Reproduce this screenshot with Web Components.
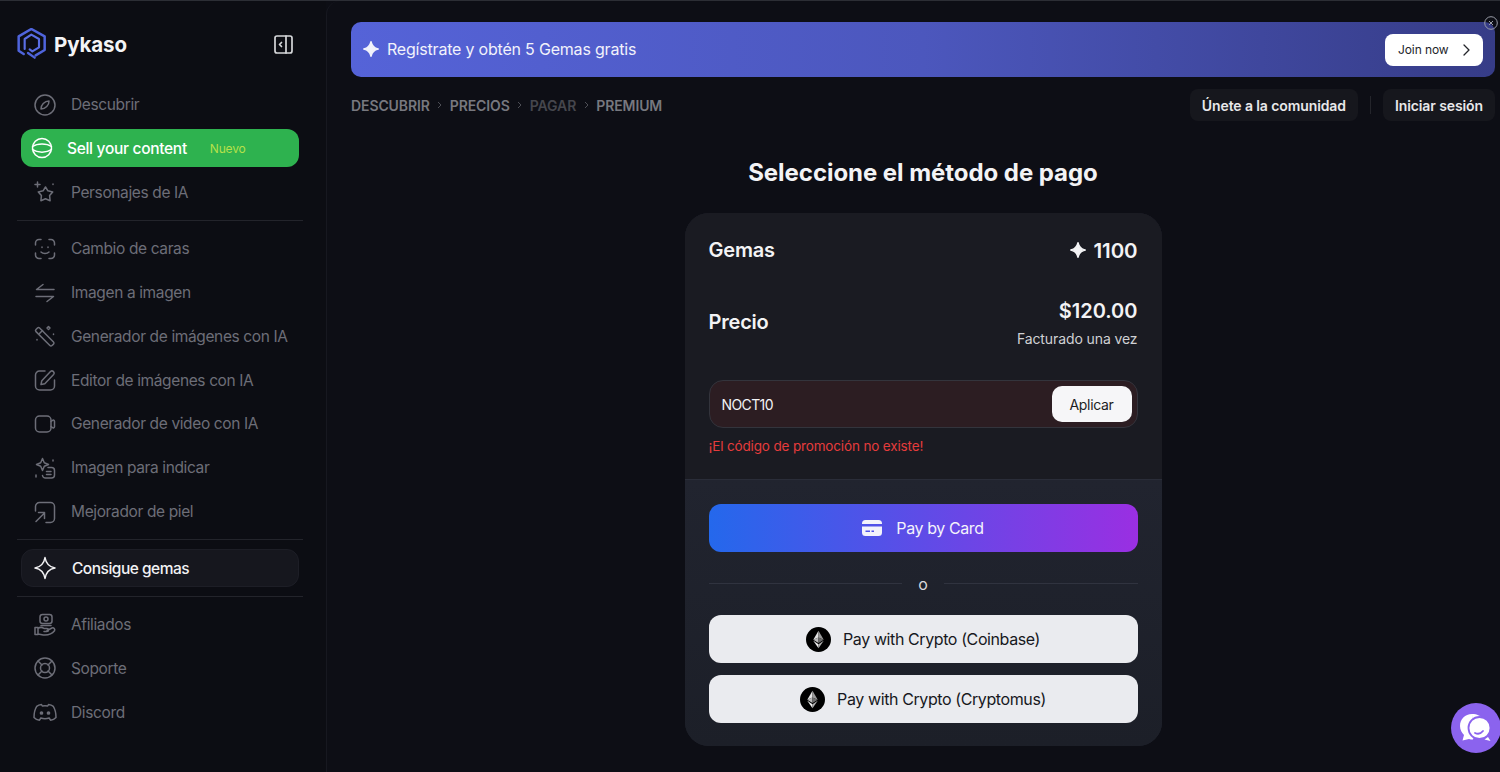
<!DOCTYPE html>
<html lang="es">
<head>
<meta charset="utf-8">
<title>Pykaso</title>
<style>
html, body { margin: 0; height: 100%; }
body { background: #0d0e15; font-family: Inter, "Liberation Sans", sans-serif; overflow: hidden; }
</style>
</head>
<body>
<pk-app>
  <pk-sidebar slot="side">
    <pk-nav-item icon="compass">Descubrir</pk-nav-item>
    <pk-nav-item icon="globe" variant="green" badge="Nuevo">Sell your content</pk-nav-item>
    <pk-nav-item icon="stars">Personajes de IA</pk-nav-item>
    <pk-divider></pk-divider>
    <pk-nav-item icon="face">Cambio de caras</pk-nav-item>
    <pk-nav-item icon="swap">Imagen a imagen</pk-nav-item>
    <pk-nav-item icon="wand">Generador de imágenes con IA</pk-nav-item>
    <pk-nav-item icon="edit">Editor de imágenes con IA</pk-nav-item>
    <pk-nav-item icon="video">Generador de video con IA</pk-nav-item>
    <pk-nav-item icon="prompt">Imagen para indicar</pk-nav-item>
    <pk-nav-item icon="skin">Mejorador de piel</pk-nav-item>
    <pk-divider></pk-divider>
    <pk-nav-item icon="gem" variant="dark">Consigue gemas</pk-nav-item>
    <pk-divider></pk-divider>
    <pk-nav-item icon="hand">Afiliados</pk-nav-item>
    <pk-nav-item icon="buoy">Soporte</pk-nav-item>
    <pk-nav-item icon="discord">Discord</pk-nav-item>
  </pk-sidebar>
  <pk-banner>Regístrate y obtén 5 Gemas gratis</pk-banner>
  <pk-topbar></pk-topbar>
  <pk-payment></pk-payment>
  <pk-chat></pk-chat>
</pk-app>

<script>
const ICONS = {
  compass: '<circle cx="12" cy="12" r="10"/><path d="M16 8c.2 4-3.500 8-8 8-.2-4 3.500-8 8-8z"/>',
  globe: '<circle cx="12" cy="12" r="9.500"/><path d="M2.500 10.500c5-3.500 14-3.500 19 0M2.500 13.500c5 3.500 14 3.500 19 0"/>',
  stars: '<path d="M12.500 7l2.400 3.800 4.800 1.100-3.100 3.700.5 5.200-4.600-2-4.600 2 .5-5.200-3.100-3.700 4.800-1.100z"/><path d="M4.500 2v5M2 4.500h5M20 4v.5"/>',
  face: '<path d="M8 2.500H6A3.500 3.500 0 0 0 2.500 6v2M16 2.500h2A3.500 3.500 0 0 1 21.500 6v2M8 21.500H6A3.500 3.500 0 0 1 2.500 18v-2M16 21.500h2a3.500 3.500 0 0 0 3.500-3.500v-2"/><path d="M8 15c2 2 6 2 8 0M9 10v.5M15 10v.5"/>',
  swap: '<path d="M21 8.500H3.500L10 3.500M3 15.500h17.500L14 20.500"/>',
  wand: '<path d="M3 5.500l1.500-1.500a1.500 1.500 0 0 1 2.100 0L20.500 18a1.500 1.500 0 0 1 0 2.100L19 21.500a1.500 1.500 0 0 1-2.100 0L3 7.600a1.500 1.500 0 0 1 0-2.100z"/><path d="M6.500 9.500l3-3M15.500 2.500l1.500 1.500-1.500 1.500-1.500-1.500zM4 15.500v.5M20.500 10v.5"/>',
  edit: '<path d="M12 3H6.500A4 4 0 0 0 2.500 7v11a4 4 0 0 0 4 4h11a4 4 0 0 0 4-4v-6"/><path d="M8 16.500l.8-3.800 8.700-9.200a2.200 2.200 0 0 1 3.100 3.100l-8.800 9.100z"/>',
  video: '<rect x="2.500" y="4" width="15.500" height="16" rx="4"/><path d="M18 9.500l1.500-1.200a1.300 1.300 0 0 1 2 1v5.400a1.300 1.300 0 0 1-2 1L18 14.500"/>',
  prompt: '<path d="M9.500 2.500l1.800 4.200 4.200 1.800-4.200 1.800-1.800 4.200-1.800-4.200-4.200-1.800 4.200-1.800z"/><path d="M15 11.500h3.500a3 3 0 0 1 3 3V19a3 3 0 0 1-3 3h-6a3 3 0 0 1-3-2.500M13.500 15.500h4.500M13.500 18.500h4.500M20 4v1M3 19v2"/>',
  skin: '<path d="M2.500 11V6.500a4 4 0 0 1 4-4h11a4 4 0 0 1 4 4v12a4 4 0 0 1-4 4H13"/><path d="M3 21.500l8-8M5.500 12.500h6v6"/>',
  gem: '<path d="M12 1.500c1 6 4 9.500 10 10.500-6 1-9 4.500-10 10.500-1-6-4-9.500-10-10.500 6-1 9-4.500 10-10.500z"/>',
  hand: '<rect x="7" y="1.500" width="12" height="9" rx="2.500"/><circle cx="13" cy="6" r="2"/><path d="M8 12.500h10"/><path d="M2 14.500h3v7H2zM5 15.500c2-1.500 4-1.500 6 0h3a1.500 1.500 0 0 1 0 3h-3M14 17.500l5-2.500a2 2 0 0 1 2.500 2.800C19 21 16 22 12 22c-3 0-5-1-7-1"/>',
  buoy: '<circle cx="12" cy="12" r="10"/><circle cx="12" cy="12" r="4.500"/><path d="M5 5l4 4M19 5l-4 4M5 19l4-4M19 19l-4-4"/>',
  discord: '<path d="M8.500 4.500c-2 .2-3.700.9-4.800 1.800C2 9 1 13 1 17.500c1.500 1.700 3.500 2.500 5.500 2.700l1.300-2.200c2.800 1 5.600 1 8.400 0l1.300 2.200c2-.2 4-1 5.500-2.700 0-4.500-1-8.500-2.700-11.200-1.100-.9-2.800-1.600-4.800-1.800l-.8 1.500a15 15 0 0 0-5.400 0z"/><circle cx="8.500" cy="13" r="1.100" fill="currentColor"/><circle cx="15.500" cy="13" r="1.100" fill="currentColor"/>'
};

// fat four point star, used filled in the banner and next to the gem count
const SPARK = '<path fill="currentColor" stroke="currentColor" stroke-width="2.200" stroke-linejoin="round" d="M12 2.500c1.300 5.800 3.700 8.200 9.500 9.500-5.800 1.300-8.200 3.700-9.500 9.500-1.300-5.800-3.700-8.200-9.500-9.500 5.800-1.300 8.200-3.700 9.500-9.500z"/>';

const ETH = `<svg width="25" height="25" viewBox="0 0 24 24"><circle cx="12" cy="12" r="12" fill="#000"/>
  <path d="M12 3.500L7 12.200 12 10z" fill="#e4e4e4"/><path d="M12 3.500l5 8.700L12 10z" fill="#9a9a9a"/>
  <path d="M12 10l-5 2.200L12 15.300z" fill="#b8b8b8"/><path d="M12 10l5 2.200L12 15.300z" fill="#6e6e6e"/>
  <path d="M7 13.300L12 20.300v-3.800z" fill="#f0f0f0"/><path d="M17 13.300L12 20.300v-3.800z" fill="#b0b0b0"/></svg>`;

class PkIcon extends HTMLElement {
  static get observedAttributes() {
    return ['name'];
  }
  constructor() {
    super();
    this.attachShadow({ mode: 'open' });
  }
  attributeChangedCallback() {
    this.update();
  }
  update() {
    const size = this.getAttribute('size') || 24;
    this.shadowRoot.innerHTML = `
      <style>:host { display: inline-flex; flex: none; } svg { display: block; }</style>
      <svg width="${size}" height="${size}" viewBox="0 0 24 24" fill="none" stroke="currentColor"
        stroke-width="1.500" stroke-linecap="round" stroke-linejoin="round">${ICONS[this.getAttribute('name')] || ''}</svg>`;
  }
}
customElements.define('pk-icon', PkIcon);

const apptpl = document.createElement('template');
apptpl.innerHTML = `
  <style>
    :host { display: flex; height: 772px; box-sizing: border-box; border-top: 1px solid #2c2e35; position: relative; overflow: hidden; }
    #main { flex: 1; min-width: 0; padding: 21px 5px 0 24px; border-left: 1px solid #171820; border-top-left-radius: 14px; display: flex; flex-direction: column; }
  </style>
  <slot name="side"></slot>
  <div id="main"><slot></slot></div>`;

class PkApp extends HTMLElement {
  constructor() {
    super();
    this.attachShadow({ mode: 'open' }).appendChild(apptpl.content.cloneNode(true));
  }
}
customElements.define('pk-app', PkApp);

const sidetpl = document.createElement('template');
sidetpl.innerHTML = `
  <style>
    :host { display: block; width: 326px; flex: none; box-sizing: border-box; padding: 0 23px 0 17px; background: #0c0d13; }
    #head { height: 81.700px; display: flex; align-items: center; padding-top: 5px; box-sizing: border-box; }
    #name { font: 700 20.500px Inter, "Liberation Sans", sans-serif; color: #f4f4f6; margin-left: 7px; letter-spacing: -.1px; }
    #toggle { margin-left: auto; margin-right: 10px; color: #d6d7da; display: block; }
  </style>
  <div id="head">
    <svg width="30" height="33" viewBox="22 22 90 99" fill="none" stroke-linecap="round" stroke-linejoin="round">
      <path d="M42 100L27 90V47L65 25l40 22v41l-27 16" stroke="#4f64dc" stroke-width="7.500"/>
      <path d="M45 85V55l20-13 23 13v25L68 92l-8-6" stroke="#5a6ee4" stroke-width="6.500"/>
      <path d="M55 97l20 14" stroke="#4f64dc" stroke-width="7"/>
    </svg>
    <span id="name">Pykaso</span>
    <svg id="toggle" width="19" height="19" viewBox="0 0 19 19" fill="none" stroke="currentColor" stroke-width="1.700" stroke-linecap="round" stroke-linejoin="round">
      <rect x="1" y="1" width="17" height="17" rx="2"/><path d="M12 1v17M7.500 7.500L5.500 9.500l2 2"/>
    </svg>
  </div>
  <slot></slot>`;

class PkSidebar extends HTMLElement {
  constructor() {
    super();
    this.attachShadow({ mode: 'open' }).appendChild(sidetpl.content.cloneNode(true));
  }
}
customElements.define('pk-sidebar', PkSidebar);

class PkDivider extends HTMLElement {
  constructor() {
    super();
    this.attachShadow({ mode: 'open' }).innerHTML = `
      <style>:host { display: block; height: 1px; background: #23242b; margin: 5.900px 0; }</style>`;
  }
}
customElements.define('pk-divider', PkDivider);

const navtpl = document.createElement('template');
navtpl.innerHTML = `
  <style>
    :host { display: flex; align-items: center; height: 43.800px; padding: 0 4px; font: 400 15.500px Inter, "Liberation Sans", sans-serif; color: #6d6e78; }
    #row { flex: 1; display: flex; align-items: center; height: 38px; padding-left: 12px; gap: 14px; border-radius: 12px; white-space: nowrap; letter-spacing: -.37px; }
    :host([variant="green"]) #row { background: #2eb24f; color: #fff; gap: 13px; padding-left: 9px; font-weight: 500; letter-spacing: -.3px; }
    :host([variant="dark"]) #row { background: #16171e; color: #f2f2f4; border: 1px solid #1d1e26; box-sizing: border-box; font-weight: 500; padding-left: 11px; gap: 15px; letter-spacing: -.5px; }
    #badge { font-size: 12px; color: #b5e04a; margin-left: 10px; font-weight: 400; letter-spacing: -.2px; }
  </style>
  <div id="row"><pk-icon></pk-icon><span><slot></slot></span><span id="badge"></span></div>`;

class PkNavItem extends HTMLElement {
  constructor() {
    super();
    this.attachShadow({ mode: 'open' }).appendChild(navtpl.content.cloneNode(true));
  }
  connectedCallback() {
    this.shadowRoot.querySelector('pk-icon').setAttribute('name', this.getAttribute('icon'));
    if (this.getAttribute('badge')) this.shadowRoot.querySelector('#badge').textContent = this.getAttribute('badge');
    else this.shadowRoot.querySelector('#badge').remove();
  }
}
customElements.define('pk-nav-item', PkNavItem);

const bannertpl = document.createElement('template');
bannertpl.innerHTML = `
  <style>
    :host { display: flex; align-items: center; height: 55px; flex: none; padding: 0 12px 2px 11px; border-radius: 10px; background: linear-gradient(90deg, #5563d8 0%, #4c57bd 50%, #363c87 100%); color: #f1f2fb; font: 400 16px Inter, "Liberation Sans", sans-serif; position: relative; box-sizing: border-box; }
    #msg { margin-left: 7px; letter-spacing: -.2px; }
    #join { margin-left: auto; width: 98px; box-sizing: border-box; height: 32px; background: #fff; border-radius: 8px; color: #23242a; font-size: 12px; letter-spacing: -.1px; display: flex; align-items: center; justify-content: space-between; padding: 0 13px; margin-bottom: -2px; white-space: nowrap; }
    #close { position: absolute; top: -6px; right: -3px; color: #9a9da8; }
    svg { display: block; }
  </style>
  <svg width="18" height="18" viewBox="0 0 24 24">${SPARK}</svg>
  <span id="msg"><slot></slot></span>
  <div id="join">Join now
    <svg width="8" height="12" viewBox="0 0 8 12" fill="none" stroke="currentColor" stroke-width="1.300" stroke-linecap="round" stroke-linejoin="round"><path d="M2 1l5 5-5 5"/></svg>
  </div>
  <svg id="close" width="14" height="14" viewBox="0 0 14 14" fill="none" stroke="currentColor" stroke-width="1"><circle cx="7" cy="7" r="6.300"/><path d="M5 5l4 4M9 5l-4 4"/></svg>`;

class PkBanner extends HTMLElement {
  constructor() {
    super();
    this.attachShadow({ mode: 'open' }).appendChild(bannertpl.content.cloneNode(true));
  }
}
customElements.define('pk-banner', PkBanner);

const toptpl = document.createElement('template');
toptpl.innerHTML = `
  <style>
    :host { display: flex; align-items: center; height: 32px; margin-top: 12px; flex: none; font: 600 14px Inter, "Liberation Sans", sans-serif; }
    #crumbs { display: flex; align-items: center; color: #77787f; gap: 7.500px; letter-spacing: -.1px; }
    #crumbs i { font-style: normal; color: #4d4e55; display: block; }
    #crumbs .off { color: #45464d; }
    #right { margin-left: auto; display: flex; align-items: center; }
    .btn { height: 32px; display: flex; align-items: center; padding: 0 12px; background: #16171d; border-radius: 8px; color: #e8e8ea; letter-spacing: -.1px; }
    #sep { width: 1px; height: 18px; background: #24252b; margin: 0 12px; }
    svg { display: block; }
  </style>
  <div id="crumbs"></div>
  <div id="right">
    <div class="btn">Únete a la comunidad</div>
    <div id="sep"></div>
    <div class="btn">Iniciar sesión</div>
  </div>`;

class PkTopbar extends HTMLElement {
  constructor() {
    super();
    this.attachShadow({ mode: 'open' }).appendChild(toptpl.content.cloneNode(true));
  }
  connectedCallback() {
    const arrow = '<i><svg width="5" height="8" viewBox="0 0 5 8" fill="none" stroke="currentColor" stroke-width="1"><path d="M1 1l3 3-3 3"/></svg></i>';
    this.shadowRoot.querySelector('#crumbs').innerHTML =
      ['DESCUBRIR', 'PRECIOS', '<span class="off">PAGAR</span>', 'PREMIUM'].map(c => `<span>${c}</span>`).join(arrow);
  }
}
customElements.define('pk-topbar', PkTopbar);

const paytpl = document.createElement('template');
paytpl.innerHTML = `
  <style>
    :host { display: block; flex: none; font-family: Inter, "Liberation Sans", sans-serif; color: #f3f3f5; }
    h1 { margin: 36px 0 24px; font-size: 24px; line-height: 32px; font-weight: 700; text-align: center; letter-spacing: -.05px; }
    #card { width: 477px; margin: 0 auto; border-radius: 24px; overflow: hidden; background: #1e212c; }
    #top { height: 267px; box-sizing: border-box; padding: 23px 24px 0; background: #1a1b22; border-bottom: 1px solid #2a2d39; }
    #bottom { height: 266px; box-sizing: border-box; padding: 24px 24px 0; background: linear-gradient(180deg, #21242f, #1c1f28); }
    .row { display: flex; justify-content: space-between; align-items: center; }
    .lbl { font-size: 20px; font-weight: 600; letter-spacing: -.2px; }
    #gems { height: 28px; }
    #gemv { display: flex; align-items: center; gap: 7px; font-size: 20.500px; font-weight: 600; letter-spacing: -.1px; }
    #price { margin-top: 29px; height: 58px; }
    #amount { text-align: right; }
    #amount b { display: block; font-size: 20px; line-height: 28px; font-weight: 600; }
    #amount small { display: block; font-size: 14px; line-height: 18px; margin-top: 5px; color: #d0d1d4; letter-spacing: -.1px; }
    #promo { margin-top: 29px; height: 48px; box-sizing: border-box; border: 1px solid #33343c; border-radius: 14px; background: #2c1d22; display: flex; align-items: center; padding: 0 5px 0 12px; font-size: 14px; letter-spacing: -.6px; }
    #apply { margin-left: auto; width: 80px; height: 36px; border-radius: 10px; background: #f6f6f8; color: #1d1e24; display: flex; align-items: center; justify-content: center; letter-spacing: -.3px; }
    #err { margin-top: 9px; font-size: 13.500px; line-height: 18px; color: #e53c3c; letter-spacing: -.15px; }
    .pay { height: 48px; border-radius: 12px; display: flex; align-items: center; justify-content: center; font-size: 16px; gap: 12px; letter-spacing: -.4px; }
    #card-btn { background: linear-gradient(90deg, #2468ec, #9a2fe2); color: #f3f3fb; gap: 14px; }
    .crypto { background: #eaebef; color: #17181d; }
    #or { display: flex; align-items: center; gap: 16.500px; height: 63px; font-size: 16px; color: #d8d9dc; }
    #or span { flex: 1; height: 1px; background: #30333f; }
    .crypto + .crypto { margin-top: 12px; }
    svg { display: block; }
  </style>
  <h1>Seleccione el método de pago</h1>
  <div id="card">
    <div id="top">
      <div class="row" id="gems">
        <div class="lbl">Gemas</div>
        <div id="gemv"><svg width="18" height="18" viewBox="0 0 24 24">${SPARK}</svg>1100</div>
      </div>
      <div class="row" id="price">
        <div class="lbl">Precio</div>
        <div id="amount"><b>$120.00</b><small>Facturado una vez</small></div>
      </div>
      <div id="promo">NOCT10<div id="apply">Aplicar</div></div>
      <div id="err">¡El código de promoción no existe!</div>
    </div>
    <div id="bottom">
      <div class="pay" id="card-btn">
        <svg width="20" height="16" viewBox="0 0 20 16"><path fill="currentColor" fill-rule="evenodd" d="M3.500 0h13A3.500 3.500 0 0 1 20 3.500V4H0v-.5A3.500 3.500 0 0 1 3.500 0zM0 6.500h20v6a3.500 3.500 0 0 1-3.500 3.500h-13A3.500 3.500 0 0 1 0 12.500zM3.500 10.500v1.500H8v-1.500zM9.500 10.500v1.500H12v-1.500z"/></svg>
        Pay by Card
      </div>
      <div id="or"><span></span>o<span></span></div>
      <div class="pay crypto">${ETH}Pay with Crypto (Coinbase)</div>
      <div class="pay crypto">${ETH}Pay with Crypto (Cryptomus)</div>
    </div>
  </div>`;

class PkPayment extends HTMLElement {
  constructor() {
    super();
    this.attachShadow({ mode: 'open' }).appendChild(paytpl.content.cloneNode(true));
  }
}
customElements.define('pk-payment', PkPayment);

class PkChat extends HTMLElement {
  constructor() {
    super();
    this.attachShadow({ mode: 'open' }).innerHTML = `
      <style>
        :host { position: absolute; left: 1451px; top: 702px; width: 50px; height: 50px; border-radius: 50%; background: #8b63ee; display: flex; align-items: center; justify-content: center; }
        svg { display: block; }
      </style>
      <svg width="34" height="30" viewBox="0 0 34 30">
        <path fill="#fff" d="M13 1C6 1 1 6 1 13c0 4 2 7 4 9l-1.500 5.500L10 26c1 .4 3 .5 4 .5z"/>
        <path fill="#fff" d="M13 1c5 0 9 2 11 5l-10 20z"/>
        <circle cx="20.500" cy="15" r="11" fill="#fff" stroke="#8b63ee" stroke-width="1.800"/>
        <path d="M29 24l2.500 4-6-1.500z" fill="#fff"/>
        <path d="M16 20c3 1.500 6 .5 8-2" fill="none" stroke="#8b63ee" stroke-width="1.800" stroke-linecap="round"/>
      </svg>`;
  }
}
customElements.define('pk-chat', PkChat);
</script>
</body>
</html>
